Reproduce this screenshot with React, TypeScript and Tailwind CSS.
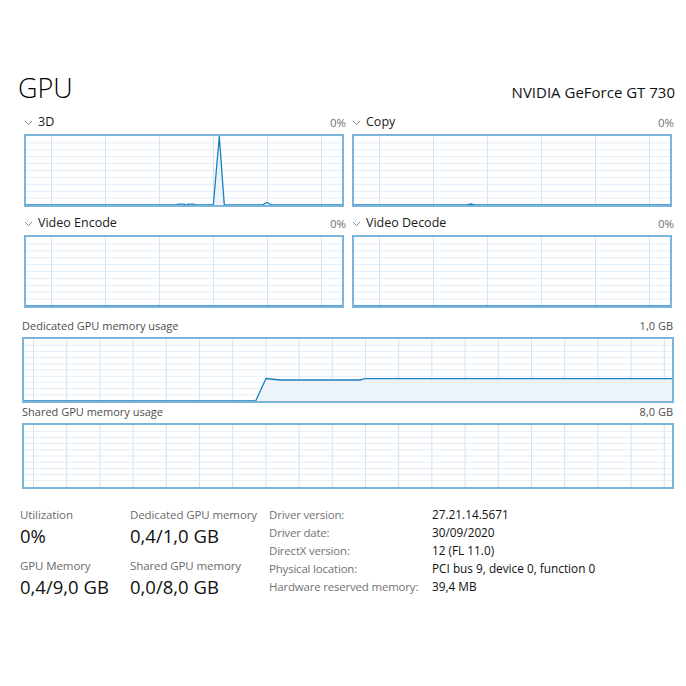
import React from "react";

type Pt = [number, number];

const FONT = { fontFamily: '"Open Sans", "Noto Sans", sans-serif' };

function Chevron() {
  return (
    <svg width="9" height="6" viewBox="0 0 9 6" className="shrink-0">
      <polyline points="1,1 4.5,4.5 8,1" fill="none" stroke="#8a8a8a" strokeWidth="1" />
    </svg>
  );
}

// graph area with grid lines; line = list of points in inner px coords
function Graph({
  w,
  h,
  colStart,
  colStep,
  line,
}: {
  w: number;
  h: number;
  colStart: number;
  colStep: number;
  line?: Pt[];
}) {
  const rows = Array.from({ length: 9 }, (_, i) => ((i + 1) * h) / 10);
  const cols: number[] = [];
  for (let x = colStart; x < w; x += colStep) cols.push(x);
  const d = line ? "M" + line.map((p) => p.join(",")).join(" L") : "";
  const fill = line ? d + ` L${line[line.length - 1][0]},${h} L${line[0][0]},${h} Z` : "";
  return (
    <div className="border-2 border-[#7cb4da] bg-white" style={{ width: w + 4, height: h + 4 }}>
      <svg width={w} height={h} className="block">
        {rows.map((y) => (
          <line key={"r" + y} x1={0} x2={w} y1={y} y2={y} stroke="#e3edf6" strokeWidth="1" />
        ))}
        {cols.map((x) => (
          <line key={"c" + x} x1={x} x2={x} y1={0} y2={h} stroke="#d3e3f0" strokeWidth="1" />
        ))}
        {line && <path d={fill} fill="#eaf3fa" opacity="0.9" />}
        {line && <path d={d} fill="none" stroke="#1b7fc2" strokeWidth="1.3" strokeLinejoin="round" />}
      </svg>
    </div>
  );
}

function EngineChart({ name, line }: { name: string; line?: Pt[] }) {
  return (
    <div className="flex flex-col">
      <div className="h-[22px] flex items-center text-[12.5px] w-[322px]">
        <Chevron />
        <span className="ml-[5px] text-[#1a1a1a]">{name}</span>
        <span className="ml-auto text-[11.5px] text-[#707070]">0%</span>
      </div>
      <Graph w={316} h={69} colStart={25.5} colStep={54} line={line} />
    </div>
  );
}

function MemChart({ label, max, line }: { label: string; max: string; line?: Pt[] }) {
  return (
    <div className="flex flex-col">
      <div className="h-[20px] flex items-center justify-between text-[11px] text-[#4d4d4d] pr-[1px]">
        <span>{label}</span>
        <span>{max}</span>
      </div>
      <Graph w={648} h={62} colStart={9.5} colStep={33.2} line={line} />
    </div>
  );
}

const spike3d: Pt[] = [
  [0, 69], [150, 69], [152, 68.2], [158, 68.2], [160, 69], [162, 68.2], [168, 68.2], [170, 69],
  [187.3, 69], [193.3, 0.5], [198.3, 69], [236, 69], [241, 66.5], [246, 69], [316, 69],
];
const copyLine: Pt[] = [[0, 69], [113, 69], [117, 68], [121, 69], [316, 69]];
const flat: Pt[] = [[0, 69], [316, 69]];
const dedicated: Pt[] = [
  [0, 62], [231.7, 62], [242, 39.5], [256, 41], [336, 41], [341, 39.7], [648, 39.7],
];

function Stat({ label, value }: { label: string; value: string }) {
  return (
    <div className="flex flex-col">
      <div className="h-[18px] flex items-center text-[11.5px] tracking-[-0.1px] text-[#6b6b6b]">{label}</div>
      <div className="h-[24px] flex items-center text-[18.5px] text-[#111]">{value}</div>
    </div>
  );
}

const details: [string, string][] = [
  ["Driver version:", "27.21.14.5671"],
  ["Driver date:", "30/09/2020"],
  ["DirectX version:", "12 (FL 11.0)"],
  ["Physical location:", "PCI bus 9, device 0, function 0"],
  ["Hardware reserved memory:", "39,4 MB"],
];

export default function App() {
  return (
    <div className="w-[686px] h-[686px] bg-white overflow-hidden" style={FONT}>
      {/* title */}
      <div className="pt-[74px] pl-[18px] pr-[11px] flex items-baseline justify-between">
        <h1 className="text-[27px] leading-[27px] font-light text-black">GPU</h1>
        <span className="text-[15px] text-[#111]">NVIDIA GeForce GT 730</span>
      </div>

      {/* engines */}
      <div className="mt-[8px] pl-[24px] grid grid-cols-[320px_320px] gap-x-[8px] gap-y-[6px]">
        <EngineChart name="3D" line={spike3d} />
        <EngineChart name="Copy" line={copyLine} />
        <EngineChart name="Video Encode" line={flat} />
        <EngineChart name="Video Decode" line={flat} />
      </div>

      {/* memory */}
      <div className="mt-[9px] pl-[22px] w-[674px] flex flex-col">
        <MemChart label="Dedicated GPU memory usage" max="1,0 GB" line={dedicated} />
        <MemChart label="Shared GPU memory usage" max="8,0 GB" />
      </div>

      {/* stats */}
      <div className="mt-[17px] pl-[20px] flex">
        <div className="grid grid-cols-[110px_139px] gap-y-[9px]">
          <Stat label="Utilization" value="0%" />
          <Stat label="Dedicated GPU memory" value="0,4/1,0 GB" />
          <Stat label="GPU Memory" value="0,4/9,0 GB" />
          <Stat label="Shared GPU memory" value="0,0/8,0 GB" />
        </div>
        <div className="flex flex-col text-[11.5px]">
          {details.map(([k, v]) => (
            <div key={k} className="h-[18px] flex items-center">
              <span className="w-[163px] tracking-[-0.2px] text-[#737373]">{k}</span>
              <span className="text-[11.8px] text-[#111]">{v}</span>
            </div>
          ))}
        </div>
      </div>
    </div>
  );
}
